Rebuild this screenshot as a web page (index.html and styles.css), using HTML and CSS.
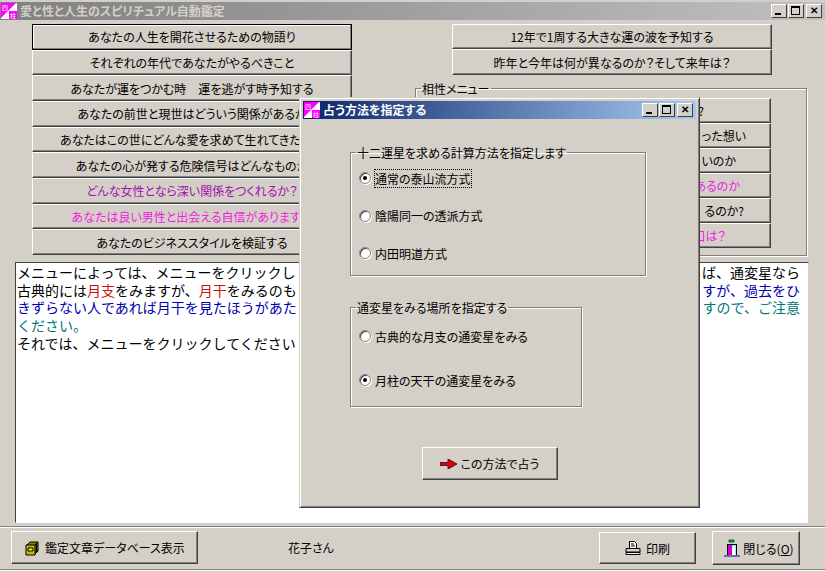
FILE: index.html
```html
<!DOCTYPE html>
<html lang="ja">
<head>
<meta charset="utf-8">
<title>愛と性と人生のスピリチュアル自動鑑定</title>
<link rel="stylesheet" href="styles.css">
</head>
<body>
<main class="window">
  <header class="titlebar inactive">
    <svg class="appicon" viewBox="0 0 16 16" width="16" height="16"><rect width="16" height="16" fill="#fff"/><path d="M0 0h15L0 15z" fill="#f0f"/><path d="M8 8h8v8H8z" fill="#f0f"/><text x="1" y="7" class="icon-glyph">四</text><text x="9" y="15" class="icon-glyph">柱</text></svg>
    <span class="title-text">愛と性と人生のスピリチュアル自動鑑定</span>
    <span class="caps">
      <span class="cap"><i class="min"></i></span><span class="cap"><i class="max"></i></span><span class="cap"><i class="close">✕</i></span>
    </span>
  </header>

  <section class="menus">
    <div class="col-left">
      <button class="btn default">あなたの人生を開花させるための物語り</button>
      <button class="btn">それぞれの年代であなたがやるべきこと</button>
      <button class="btn">あなたが運をつかむ時　運を逃がす時予知する</button>
      <button class="btn">あなたの前世と現世はどういう関係があるか</button>
      <button class="btn">あなたはこの世にどんな愛を求めて生れてきたのか</button>
      <button class="btn">あなたの心が発する危険信号はどんなものか</button>
      <button class="btn purple">どんな女性となら深い関係をつくれるか？</button>
      <button class="btn pink">あなたは良い男性と出会える自信がありますか</button>
      <button class="btn">あなたのビジネススタイルを検証する</button>
    </div>
    <div class="col-right">
      <div class="top-pair">
        <button class="btn">12年で1周する大きな運の波を予知する</button>
        <button class="btn">昨年と今年は何が異なるのか？そして来年は？</button>
      </div>
      <fieldset class="group compat">
        <legend>相性メニュー</legend>
        <div class="compat-list">
          <button class="btn end">?</button>
          <button class="btn end">った想い</button>
          <button class="btn end">いのか</button>
          <button class="btn end pink">あるのか</button>
          <button class="btn end">るのか?</button>
          <button class="btn end pink">口は？</button>
        </div>
      </fieldset>
    </div>
  </section>

  <section class="memo">
    <p class="line"><span>メニューによっては、メニューをクリックし</span><span>ば、通変星なら</span></p>
    <p class="line"><span>古典的には<b class="red">月支</b>をみますが、<b class="red">月干</b>をみるのも</span><span class="blue">すが、過去をひ</span></p>
    <p class="line"><span class="blue">きずらない人であれば月干を見たほうがあた</span><span class="teal">すので、ご注意</span></p>
    <p class="line"><span class="teal">ください。</span></p>
    <p class="line"><span>それでは、メニューをクリックしてください</span></p>
  </section>

  <footer class="statusbar">
    <button class="btn tool db">
      <svg viewBox="0 0 16 16" width="16" height="16"><path d="M3 5 6 2h8v9l-3 3z" fill="#808000" stroke="#000"/><path d="M2 5h9v10H2z" fill="#c8b820" stroke="#000"/><path d="M4 8h5v3H4z" fill="#ff0" stroke="#000"/><path d="M11 5l3-3" stroke="#000"/><path d="M12 4h1v8h-1z" fill="#000"/></svg>
      <span>鑑定文章データベース表示</span>
    </button>
    <span class="user">花子さん</span>
    <span class="spacer"></span>
    <button class="btn tool print">
      <svg viewBox="0 0 16 16" width="16" height="16"><path d="M4.500 1.500h5l2 2v5h-7z" fill="#fff" stroke="#000"/><path d="M6 4h3M6 6h4" stroke="#000"/><path d="M1 8.500h14v3.500H1z" fill="#d4d0c8" stroke="#000"/><path d="M1 12.500h14v2H1z" fill="#fff" stroke="#000"/></svg>
      <span>印刷</span>
    </button>
    <button class="btn tool quit">
      <svg viewBox="0 0 16 18" width="16" height="18"><path d="M5 1h5v2H5z" fill="#0a0" stroke="#063"/><path d="M3 5h10v11H3z" fill="#000"/><path d="M4 6h4v10H4z" fill="#c0c"/><path d="M8 6h4v10H8z" fill="#9ef"/><path d="M8 9l3-2v9H8z" fill="#fff"/><path d="M0 17h16" stroke="#00a"/></svg>
      <span>閉じる(<u>O</u>)</span>
    </button>
  </footer>
</main>

<section class="dialog" aria-label="占う方法を指定する">
  <header class="titlebar active">
    <svg class="appicon" viewBox="0 0 16 16" width="16" height="16"><rect width="16" height="16" fill="#fff"/><path d="M0 0h15L0 15z" fill="#f0f"/><path d="M8 8h8v8H8z" fill="#f0f"/><text x="1" y="7" class="icon-glyph">四</text><text x="9" y="15" class="icon-glyph">柱</text></svg>
    <span class="title-text">占う方法を指定する</span>
    <span class="caps">
      <span class="cap"><i class="min"></i></span><span class="cap"><i class="max"></i></span><span class="cap"><i class="close">✕</i></span>
    </span>
  </header>
  <div class="dialog-body">
    <fieldset class="group calc">
      <legend>十二運星を求める計算方法を指定します</legend>
      <label class="radio"><i class="dot on"></i><span class="focus">通常の泰山流方式</span></label>
      <label class="radio"><i class="dot"></i><span>陰陽同一の透派方式</span></label>
      <label class="radio"><i class="dot"></i><span>内田明道方式</span></label>
    </fieldset>
    <fieldset class="group place">
      <legend>通変星をみる場所を指定する</legend>
      <label class="radio"><i class="dot"></i><span>古典的な月支の通変星をみる</span></label>
      <label class="radio"><i class="dot on"></i><span>月柱の天干の通変星をみる</span></label>
    </fieldset>
    <button class="btn go">
      <svg viewBox="0 0 18 10" width="18" height="10"><path d="M0 3.500h8V0l9 5-9 5V6.500H0z" fill="#e00010" stroke="#300" stroke-width=".8"/></svg>
      <span>この方法で占う</span>
    </button>
  </div>
</section>
</body>
</html>
```

FILE: styles.css
```css
* { box-sizing: border-box; }
html, body { margin: 0; height: 100%; }
body {
  width: 825px;
  height: 572px;
  overflow: hidden;
  position: relative;
  background: #d4d0c8;
  color: #000;
  font: 12px "Noto Sans CJK JP", sans-serif;
  font-feature-settings: "palt";
}
.window {
  height: 572px;
  padding-top: 2px;
  display: flex;
  flex-direction: column;
}
.titlebar {
  height: 18px;
  padding: 0 3px 0 1px;
  display: flex;
  align-items: center;
  gap: 3px;
  flex: none;
  color: #d4d0c8;
  font-size: 12px;
  font-weight: 700;
}
.titlebar.inactive { background: linear-gradient(90deg, #808080, #c0c0c0); }
.titlebar.active { background: linear-gradient(90deg, #0a246a, #a6caf0); color: #fff; }
.appicon { flex: none; }
.icon-glyph { font-size: 6px; font-weight: 400; fill: #fff; }
.title-text { white-space: nowrap; line-height: 18px; }
.caps { margin-left: auto; display: flex; }
.cap {
  width: 16px;
  height: 14px;
  margin-left: 1px;
  position: relative;
  background: #d4d0c8;
  border: 1px solid;
  border-color: #fff #404040 #404040 #fff;
}
.cap:last-child { margin-left: 2px; }
.cap i { position: absolute; }
.cap .min { left: 3px; bottom: 2px; width: 6px; height: 2px; background: #000; }
.cap .max { left: 2px; top: 1px; width: 9px; height: 9px; border: 1px solid #000; border-top-width: 2px; }
.cap .close { left: 0; right: 0; top: -1px; line-height: 12px; font-size: 10px; font-style: normal; font-weight: 700; text-align: center; color: #000; }

.btn {
  display: block;
  padding: 0;
  margin: 0;
  min-width: 0;
  background: #d4d0c8;
  border: 1px solid;
  border-color: #fff #404040 #404040 #fff;
  box-shadow: inset -1px -1px 0 #808080;
  font: inherit;
  color: #000;
  white-space: nowrap;
  overflow: hidden;
  text-align: center;
}
.btn.default { border-color: #000; box-shadow: inset -1px -1px 0 #808080, inset 1px 1px 0 #fff; }
.btn.purple { color: #a010b0; }
.btn.pink { color: #f020e0; }

.menus {
  height: 236px;
  flex: none;
  padding: 4px 0 0 32px;
  display: flex;
}
.col-left {
  width: 320px;
  height: 231px;
  flex: none;
  display: grid;
  grid-template-rows: repeat(9, 1fr);
}
.col-right { width: 455px; margin-left: 63px; position: relative; }
.top-pair {
  width: 320px;
  margin-left: 37px;
  height: 51px;
  display: grid;
  grid-template-rows: 25px 26px;
}
.group {
  margin: 0;
  padding: 0;
  min-width: 0;
  border: 1px solid #808080;
  box-shadow: 1px 1px 0 #fff, inset 1px 1px 0 #fff;
}
.group legend {
  margin-left: 5px;
  padding: 0 1px;
  line-height: 13px;
  white-space: nowrap;
}
.compat {
  width: 392px;
  height: 174px;
  margin-top: 7px;
}
.compat-list {
  width: 318px;
  margin-left: 37px;
  margin-top: 3px;
  display: grid;
  grid-template-rows: repeat(6, 25px);
}
.btn.end { text-align: right; }
.btn.end:nth-child(1) { padding-right: 66px; }
.btn.end:nth-child(2) { padding-right: 24px; }
.btn.end:nth-child(3) { padding-right: 34px; }
.btn.end:nth-child(4) { padding-right: 30px; }
.btn.end:nth-child(5) { padding-right: 26px; }
.btn.end:nth-child(6) { padding-right: 44px; }

.memo {
  height: 261px;
  flex: none;
  margin: 6px 16px 0 15px;
  padding: 1px 8px 0 1px;
  background: #fff;
  border: 1px solid;
  border-color: #404040 #d4d0c8 #fff #404040;
  font-size: 14px;
  font-feature-settings: normal;
}
.line {
  margin: 0;
  height: 17.7px;
  line-height: 17.7px;
  display: flex;
  justify-content: space-between;
  white-space: nowrap;
}
.line b { font-weight: 400; }
.red { color: #d01010; }
.blue { color: #0000b0; }
.teal { color: #007878; }

.statusbar {
  height: 44px;
  flex: none;
  margin-top: 3px;
  padding: 4px 25px 0 11px;
  display: flex;
  align-items: flex-start;
  border-top: 1px solid #808080;
  border-bottom: 1px solid #808080;
  box-shadow: inset 0 1px 0 #fff, 0 1px 0 #fff;
}
.tool {
  height: 33px;
  display: flex;
  align-items: center;
  justify-content: center;
  gap: 5px;
}
.db { width: 187px; }
.print { width: 97px; margin-top: 1px; height: 32px; }
.quit { width: 88px; margin-left: 16px; height: 34px; padding-left: 6px; gap: 3px; }
.user { margin-left: 90px; line-height: 33px; }
.spacer { flex: 1; }

.dialog {
  position: absolute;
  left: 299px;
  top: 97px;
  width: 401px;
  height: 411px;
  padding: 3px;
  background: #d4d0c8;
  border: 1px solid;
  border-color: #d4d0c8 #404040 #404040 #d4d0c8;
  box-shadow: inset 1px 1px 0 #fff, inset -1px -1px 0 #808080;
}
.dialog-body {
  padding: 29px 0 0 47px;
}
.calc { width: 296px; height: 130px; margin-top: -2px; }
.place { width: 232px; height: 106px; margin-top: 25px; }
.radio {
  display: flex;
  align-items: center;
  gap: 4px;
  margin-left: 8px;
  height: 18px;
  white-space: nowrap;
}
.calc .radio { margin-bottom: 19.500px; }
.calc .radio:first-of-type { margin-top: 10px; }
.place .radio { margin-bottom: 26px; }
.place .radio:first-of-type { margin-top: 13px; }
.dot {
  width: 12px;
  height: 12px;
  flex: none;
  border-radius: 50%;
  background: #fff;
  border: 1px solid #808080;
  box-shadow: inset 1px 1px 0 #404040, 1px 1px 0 #fff;
  position: relative;
}
.dot.on::after {
  content: "";
  position: absolute;
  left: 3px;
  top: 3px;
  width: 4px;
  height: 4px;
  border-radius: 50%;
  background: #000;
}
.focus { outline: 1px dotted #000; }
.go {
  width: 136px;
  height: 33px;
  margin: 40px 0 0 72px;
  display: flex;
  align-items: center;
  justify-content: center;
  gap: 2px;
}
```
